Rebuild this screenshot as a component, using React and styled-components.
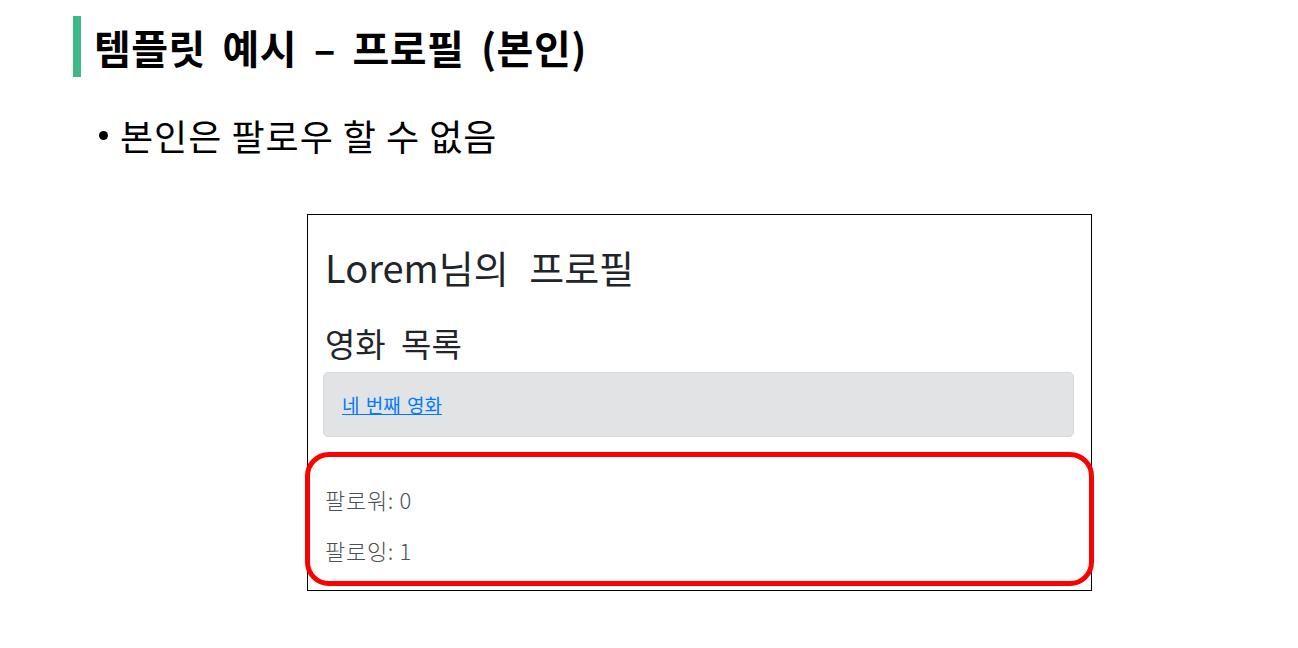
import styled, { createGlobalStyle } from "styled-components";

const Global = createGlobalStyle`
  html, body {
    margin: 0;
    padding: 0;
    background: #ffffff;
  }
  body {
    font-family: "Noto Sans CJK KR", "Noto Sans", sans-serif;
  }
`

const Slide = styled.div`
  width: 1298px;
  height: 648px;
  padding: 16px 0 0 73px;
  box-sizing: border-box;
  overflow: hidden;
`

const Title = styled.h1`
  margin: 0;
  display: flex;
  align-items: center;
  gap: 13px;
  height: 61px;
  font-size: 40px;
  font-weight: 700;
  color: #000;
  letter-spacing: 0.5px;
  word-spacing: 7px;
  &::before {
    content: "";
    width: 8px;
    height: 61px;
    background: #3dba83;
  }
`

const Bullets = styled.ul`
  margin: 34px 0 0 0;
  padding: 0 0 0 26px;
  list-style: none;
`

const Bullet = styled.li`
  display: flex;
  align-items: center;
  gap: 12px;
  font-size: 36px;
  letter-spacing: 1px;
  color: #000;
  line-height: 48px;
  &::before {
    content: "";
    width: 9px;
    height: 9px;
    border-radius: 50%;
    background: #000;
  }
`

const Shot = styled.div`
  position: relative;
  width: 785px;
  height: 377px;
  margin: 55px 0 0 234px;
  border: 1px solid #000;
  box-sizing: border-box;
  padding: 26px 17px 0 17px;
  font-family: "Noto Sans CJK KR", "Open Sans", sans-serif;
  color: #212529;
`

const ProfileName = styled.h2`
  margin: 0;
  font-size: 38px;
  font-weight: 400;
  line-height: 52px;
  word-spacing: 12px;
`

const Section = styled.h3`
  margin: 28px 0 0 0;
  font-size: 33px;
  font-weight: 400;
  line-height: 44px;
  word-spacing: 8px;
`

const Item = styled.div`
  margin: 7px 0 0 -2px;
  height: 65px;
  box-sizing: border-box;
  display: flex;
  align-items: center;
  padding: 0 18px;
  background: #e2e3e5;
  border: 1px solid #d6d8db;
  border-radius: 5px;
`

const MovieLink = styled.a`
  color: #007bff;
  font-size: 19px;
  word-spacing: 2px;
  text-decoration: underline;
`

const Stats = styled.div`
  margin-top: 48px;
  display: flex;
  flex-direction: column;
  gap: 23px;
`

const Stat = styled.p`
  margin: 0;
  font-size: 22px;
  letter-spacing: 0.7px;
  font-weight: 300;
  line-height: 28px;
  color: #495057;
`

const Highlight = styled.div`
  position: absolute;
  left: -3px;
  top: 237px;
  width: 789px;
  height: 134px;
  border: 5px solid #ff0000;
  border-radius: 24px;
  box-sizing: border-box;
`

const App = () => {
  return (
    <>
      <Global />
      <Slide>
        <Title>템플릿 예시 – 프로필 (본인)</Title>
        <Bullets>
          <Bullet>본인은 팔로우 할 수 없음</Bullet>
        </Bullets>
        <Shot>
          <ProfileName>Lorem님의 프로필</ProfileName>
          <Section>영화 목록</Section>
          <Item>
            <MovieLink href="#">네 번째 영화</MovieLink>
          </Item>
          <Stats>
            <Stat>팔로워: 0</Stat>
            <Stat>팔로잉: 1</Stat>
          </Stats>
          <Highlight />
        </Shot>
      </Slide>
    </>
  );
}

export default App;
